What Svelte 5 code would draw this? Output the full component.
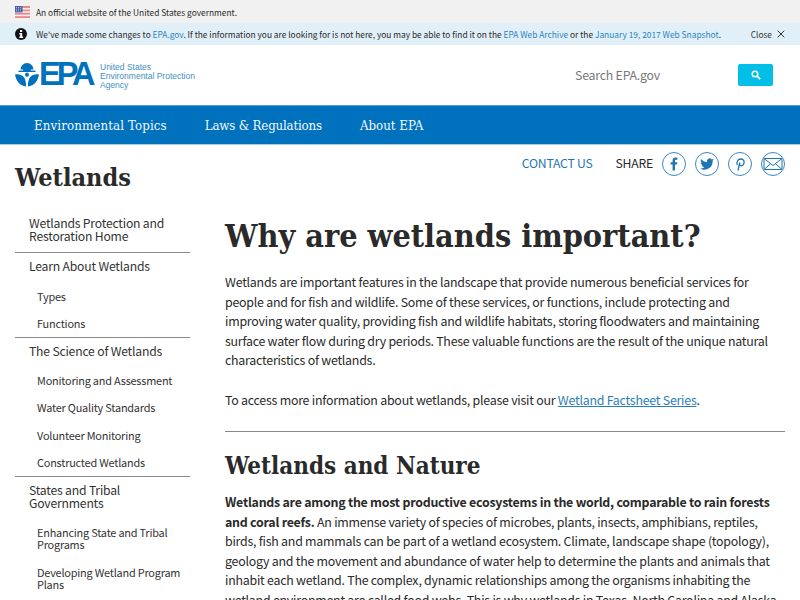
<script>
  const nav = [
    { t: 'Wetlands Protection and Restoration Home', top: true, sep: true },
    { t: 'Learn About Wetlands', top: true },
    { t: 'Types' },
    { t: 'Functions', sep: true },
    { t: 'The Science of Wetlands', top: true },
    { t: 'Monitoring and Assessment' },
    { t: 'Water Quality Standards' },
    { t: 'Volunteer Monitoring' },
    { t: 'Constructed Wetlands', sep: true },
    { t: 'States and Tribal Governments', top: true },
    { t: 'Enhancing State and Tribal Programs' },
    { t: 'Developing Wetland Program Plans' }
  ];
</script>

<div class="page">
  <div class="gov">
    <svg class="flag" width="15" height="12" viewBox="0 0 15 12">
      <rect width="15" height="12" fill="#e8878a"/>
      <rect y="2" width="15" height="1.6" fill="#f6eeee"/>
      <rect y="5.2" width="15" height="1.6" fill="#f6eeee"/>
      <rect y="8.6" width="15" height="1.6" fill="#f6eeee"/>
      <rect width="7.5" height="6.4" fill="#4a5fa8"/>
      <path d="M1 1.5h5.5M1 3.2h5.5M1 4.9h5.5" stroke="#c8d0ea" stroke-width=".8" stroke-dasharray="1 1"/>
    </svg>
    <span>An official website of the United States government.</span>
  </div>
  <div class="notice">
    <svg class="info" width="12" height="12" viewBox="0 0 12 12">
      <circle cx="6" cy="6" r="6" fill="#111"/>
      <rect x="5" y="2" width="2.2" height="2" fill="#fff"/>
      <path d="M4.3 5h2.9v3.6h.9V10H4.3V8.6h.9V6.4h-.9z" fill="#fff"/>
    </svg>
    <span class="msg">We've made some changes to <a>EPA.gov</a>. If the information you are looking for is not here, you may be able to find it on the <a>EPA Web Archive</a> or the <a>January 19, 2017 Web Snapshot</a>.</span>
    <span class="close">Close
      <svg width="8" height="8" viewBox="0 0 8 8"><path d="M.7.7l6.6 6.6M7.3.7L.7 7.3" stroke="#333" stroke-width="1"/></svg>
    </span>
  </div>
  <header class="head">
    <div class="logo">
      <svg class="mark" width="24" height="24" viewBox="0 0 24 24">
        <g fill="#0071bc">
          <path d="M12 0a6.600 6.600 0 0 1 6.500 6.600H16a4 2.600 0 0 1-8 0H5.500A6.600 6.600 0 0 1 12 0z"/>
          <rect x="3.500" y="7.600" width="17" height="1.400"/>
          <path d="M0 11.500c3.500-.6 7 .3 9 2.800 1.500 2 2.200 5.300 2 9.200C5 23 1 18 0 11.500zM24 11.500c-3.500-.6-7 .3-9 2.800-1.500 2-2.200 5.300-2 9.200 6-.5 10-5.500 11-12z"/>
          <circle cx="12" cy="11.800" r="2"/>
        </g>
      </svg>
      <span class="epa">EPA</span>
      <span class="agency">United States<br/>Environmental Protection<br/>Agency</span>
    </div>
    <div class="search">
      <span class="ph">Search EPA.gov</span>
      <button class="go" aria-label="Search">
        <svg width="10" height="10" viewBox="0 0 10 10"><circle cx="4" cy="4" r="2.800" fill="none" stroke="#fff" stroke-width="1.500"/><path d="M6 6l3.200 3.200" stroke="#fff" stroke-width="1.800"/></svg>
      </button>
    </div>
  </header>
  <nav class="main">
    <a>Environmental Topics</a><a>Laws &amp; Regulations</a><a>About EPA</a>
  </nav>
  <div class="titlebar">
    <div class="area">Wetlands</div>
    <div class="tools">
      <a class="contact">CONTACT US</a>
      <span class="share">SHARE</span>
      <span class="sc"><svg width="24" height="24" viewBox="0 0 24 24"><path d="M13 18.500v-6h2l.3-2.300H13V8.800c0-.7.200-1.100 1.100-1.100h1.300v-2c-.3 0-1-.1-1.800-.1-1.800 0-3 1.100-3 3.100v1.500H8.600v2.300h2v6z" fill="#1f74b4"/></svg></span>
      <span class="sc"><svg width="24" height="24" viewBox="0 0 24 24"><path d="M19 7.800c-.5.200-1 .4-1.600.5.600-.4 1-.9 1.200-1.600-.5.300-1.100.6-1.800.7a2.800 2.800 0 0 0-4.800 2.600C9.600 9.900 7.500 8.800 6.100 7c-.8 1.300-.4 3 .9 3.800-.5 0-.9-.1-1.300-.3 0 1.300 1 2.500 2.300 2.800-.4.100-.8.100-1.300 0 .4 1.100 1.400 1.900 2.600 1.900-1.200 1-2.700 1.400-4.200 1.200 4.500 2.900 12.800 1 12.600-7.800.5-.4 1-.9 1.300-1.300z" fill="#1f74b4"/></svg></span>
      <span class="sc"><svg width="24" height="24" viewBox="0 0 24 24"><path d="M10 18.500l1.800-8M9.300 13c-1.200-2.800.6-6 3.300-6 2.600 0 3.900 1.700 3.400 4.200-.4 2-2.500 3.600-4.300 1.800" fill="none" stroke="#1f74b4" stroke-width="1.300"/></svg></span>
      <span class="sc"><svg width="24" height="24" viewBox="0 0 24 24"><path d="M3 6.500h18v11H3zM3 6.500l9 7 9-7M3 17.500l6.800-6M21 17.500l-6.800-6" fill="none" stroke="#1f74b4" stroke-width="1"/></svg></span>
    </div>
  </div>
  <div class="body">
    <aside class="side">
      {#each nav as n}
        <div class="item" class:top={n.top} class:sep={n.sep}>{n.t}</div>
      {/each}
    </aside>
    <main class="content">
      <h1>Why are wetlands important?</h1>
      <p>Wetlands are important features in the landscape that provide numerous beneficial services for people and for fish and wildlife. Some of these services, or functions, include protecting and improving water quality, providing fish and wildlife habitats, storing floodwaters and maintaining surface water flow during dry periods. These valuable functions are the result of the unique natural characteristics of wetlands.</p>
      <p>To access more information about wetlands, please visit our <a class="u">Wetland Factsheet Series</a>.</p>
      <hr />
      <h2>Wetlands and Nature</h2>
      <p><b>Wetlands are among the most productive ecosystems in the world, comparable to rain forests and coral reefs.</b> An immense variety of species of microbes, plants, insects, amphibians, reptiles, birds, fish and mammals can be part of a wetland ecosystem. Climate, landscape shape (topology), geology and the movement and abundance of water help to determine the plants and animals that inhabit each wetland. The complex, dynamic relationships among the organisms inhabiting the wetland environment are called food webs. This is why wetlands in Texas, North Carolina and Alaska</p>
    </main>
  </div>
</div>

<style>
  :global(body) { margin: 0; background: #fff; }
  .page { width: 800px; height: 600px; overflow: hidden; font-family: "Noto Sans CJK SC", Lato, sans-serif; color: #2a2a2a; position: relative; }
  a { color: #0071bc; }
  .gov { height: 23px; background: #f1f1f1; display: flex; align-items: center; padding-left: 15px; gap: 6px; font-size: 8.400px; box-sizing: border-box; }
  .notice { height: 22px; background: #e1f0f8; display: flex; align-items: center; padding: 0 15px; font-size: 8.370px; box-sizing: border-box; white-space: nowrap; }
  .info { margin-right: 9px; flex: none; }
  .msg a { color: #2a85c0; }
  .close { margin-left: auto; display: flex; align-items: center; gap: 5px; color: #333; }
  .head { height: 60px; display: flex; align-items: center; justify-content: space-between; padding: 0 27px 0 15px; box-sizing: border-box; }
  .logo { display: flex; align-items: center; }
  .mark { flex: none; }
  .epa { font-family: "Liberation Sans", sans-serif; font-weight: 700; font-size: 32.500px; letter-spacing: -4px; color: #0071bc; width: 61px; line-height: 25px; }
  .agency { font-family: "Liberation Sans", sans-serif; font-size: 8.500px; line-height: 8.700px; color: #3f8fc4; white-space: nowrap; margin-top: 3px; }
  .search { display: flex; align-items: center; }
  .ph { font-size: 12.300px; letter-spacing: -.2px; color: #777; width: 163px; }
  .go { width: 35px; height: 22px; background: #02bfe7; border: 0; border-radius: 2px; padding: 0; display: flex; align-items: center; justify-content: center; }
  .main { height: 40px; background: #0071bc; border-top: 1px solid #5a9fd0; border-bottom: 1px solid #a8cde8; box-sizing: border-box; display: flex; align-items: center; padding-left: 34px; gap: 38px; font-family: "DejaVu Serif Condensed", serif; font-size: 13.200px; }
  .main a { color: #f2f8fc; }
  .main a:nth-child(1) { letter-spacing: .1px; }
  .main a:nth-child(2) { letter-spacing: -.2px; }
  .titlebar { height: 69px; display: flex; justify-content: space-between; padding: 0 15px; box-sizing: border-box; }
  .area { font-family: "DejaVu Serif Condensed", serif; font-weight: 700; font-size: 25px; margin-top: 18px; line-height: 30px; }
  .tools { display: flex; align-items: center; height: 38px; font-size: 12.200px; letter-spacing: -.2px; }
  .contact { margin-right: 23px; color: #1f74b4; padding-bottom: 2px; }
  .share { padding-bottom: 2px; }
  .sc { width: 24px; height: 24px; border: 1px solid #3c86bf; border-radius: 50%; margin-left: 9px; display: block; box-sizing: border-box; }
  .sc svg { display: block; margin: -1px; }
  .body { display: flex; padding: 0 15px; }
  .side { width: 175px; margin: -4px 35px 0 0; flex: none; }
  .item { font-size: 10.900px; letter-spacing: -.2px; color: #333; padding: 7.500px 5px 7.800px 22px; line-height: 12px; }
  .item.top { font-size: 12.200px; padding: 7px 10px 9px 14px; line-height: 13px; }
  .item.sep { border-bottom: 1px solid #8a8a8a; }
  .item.sep:not(.top) { padding-bottom: 7.800px; }
  .content { flex: 1; min-width: 0; }
  h1 { font-family: "DejaVu Serif Condensed", serif; font-size: 32.100px; font-weight: 700; margin: 0 0 15px; line-height: 44px; }
  h2 { font-family: "DejaVu Serif Condensed", serif; font-size: 24px; font-weight: 700; margin: 18px 0 11px; line-height: 32px; }
  p { font-size: 12.400px; letter-spacing: -.24px; line-height: 19.500px; margin: 0 0 20.500px; }
  .u { text-decoration: underline; color: #2a7fb8; }
  hr { border: 0; border-top: 1px solid #888; margin: 0; }
</style>
